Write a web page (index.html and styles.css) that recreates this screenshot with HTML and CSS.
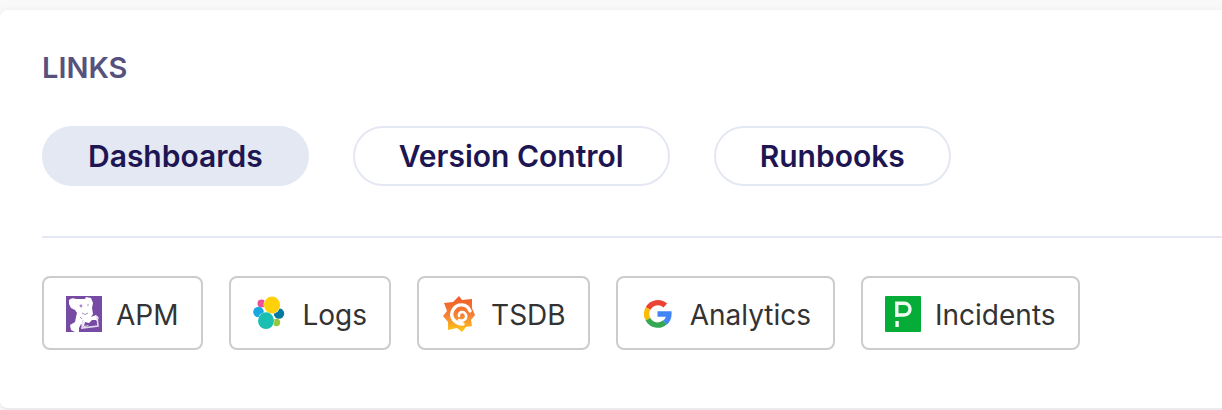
FILE: index.html
```html
<!DOCTYPE html>
<html lang="en">
<head>
<meta charset="utf-8">
<meta name="viewport" content="width=device-width, initial-scale=1">
<title>Links</title>
<link rel="stylesheet" href="styles.css">
</head>
<body>
<main class="card">
  <h2 class="title">LINKS</h2>
  <div class="tabs">
    <button class="tab tab-active" type="button">Dashboards</button>
    <button class="tab" type="button">Version Control</button>
    <button class="tab" type="button">Runbooks</button>
  </div>
  <nav class="links" aria-label="Dashboards">
    <a class="link" href="#apm">
      <svg class="icon" viewBox="0 0 36 36" aria-hidden="true">
        <path fill="#774aa4" d="M0 0h36v36H0z"/>
        <path fill="#fff" d="M3 4q3-3 7-1l9 0 1-2 5 1 2 5-1 5 1 6-2 3 5-2 3 3-3 3-5 1-3 4-4 1-3-3-2 4 0 4-4 0-4-2-1-5 5-3 1-5 1-4-2-3-4-2-2-4z"/>
        <path fill="none" stroke="#e4daee" stroke-width="1.6" d="M17 24l-1 8 16-2-1-10"/>
        <path fill="#774aa4" d="M18 30l1-4 4 1 3-3 4 0 0 4z"/>
        <circle cx="15" cy="10" r="1.4" fill="#a78ac4"/>
        <circle cx="22" cy="9" r="1" fill="#c9b7db"/>
        <path fill="none" stroke="#a78ac4" d="M16 17q3 3 6 0M14 21l2 2"/>
      </svg>
      <span>APM</span>
    </a>
    <a class="link" href="#logs">
      <svg class="icon" viewBox="0 0 36 36" aria-hidden="true">
        <circle cx="8.5" cy="7.5" r="4" fill="#ee5097"/>
        <circle cx="5.5" cy="16" r="5.3" fill="#17a8e0"/>
        <circle cx="26" cy="17.5" r="5.2" fill="#0779a1"/>
        <circle cx="23.5" cy="26.5" r="3.7" fill="#93c83e"/>
        <ellipse cx="19" cy="9" rx="8.4" ry="8.8" fill="#fff"/>
        <ellipse cx="13" cy="24.7" rx="8.4" ry="8.8" fill="#fff"/>
        <ellipse cx="19" cy="9" rx="8" ry="8.4" fill="#fed10a"/>
        <ellipse cx="13" cy="24.7" rx="8" ry="8.4" fill="#1bbfb1"/>
      </svg>
      <span>Logs</span>
    </a>
    <a class="link" href="#tsdb">
      <svg class="icon" viewBox="0 0 36 36" aria-hidden="true">
        <defs><linearGradient id="flame" x1="0" y1="0" x2="0" y2="1"><stop offset="0" stop-color="#f05a28"/><stop offset=".55" stop-color="#f68236"/><stop offset="1" stop-color="#fcca13"/></linearGradient></defs>
        <path fill="url(#flame)" d="M18 0l3 4 10-1 0 9 3 7-4 5 1 6-6 1-4 5-5-4-9 2 0-8-5-6 4-5-3-8 9-1z"/>
        <path fill="none" stroke="#fff" stroke-width="3.4" stroke-linecap="round" d="M29 15C26 7 16 7 12 14s2 14 10 14"/>
        <path fill="none" stroke="#fff" stroke-width="2.6" stroke-linecap="round" d="M18 20c-1-4 5-6 7-1 1 4-3 7-7 5"/>
      </svg>
      <span>TSDB</span>
    </a>
    <a class="link" href="#analytics">
      <svg class="icon" viewBox="0 0 36 36" aria-hidden="true">
        <g fill="none" stroke-width="5.4">
          <path stroke="#ea4335" d="M8.1 12.6A11 11 0 0 1 25.3 9.6"/>
          <path stroke="#fbbc05" d="M8.1 23.4a11 11 0 0 1 0-11"/>
          <path stroke="#34a853" d="M24.9 26.4A11 11 0 0 1 8 23.2"/>
          <path stroke="#4285f4" d="M17.5 18h11.4c0 3.5-1.5 6.7-4 8.6"/>
        </g>
      </svg>
      <span>Analytics</span>
    </a>
    <a class="link" href="#incidents">
      <svg class="icon" viewBox="0 0 36 36" aria-hidden="true">
        <rect width="36" height="36" rx="1" fill="#06ac38"/>
        <path fill="none" stroke="#effbf2" stroke-width="3.4" d="M11.8 21V7.2H19c8 0 8 11.8 0 11.8h-7.5"/>
        <path fill="#effbf2" d="M10.4 25h3.4v6h-3.4z"/>
      </svg>
      <span>Incidents</span>
    </a>
  </nav>
</main>
</body>
</html>
```
FILE: styles.css
```css
* { box-sizing: border-box; }
body {
  margin: 0;
  padding: 10px 0 0;
  background: #f9f9f9;
  color: #333;
  font-family: Inter, "Liberation Sans", sans-serif;
}
.card {
  padding: 40px 0 58px 42px;
  background: #fff;
  border-bottom: 2px solid #ebebed;
  border-radius: 8px 0 0 8px;
  box-shadow: 0 0 6px rgba(0, 0, 0, 0.06);
}
.title {
  margin: 0 0 40px;
  color: #57517e;
  font-size: 29px;
  font-weight: 600;
  line-height: 36px;
}
.tabs {
  display: flex;
  flex-wrap: wrap;
  gap: 44px;
  padding-bottom: 50px;
  border-bottom: 2px solid #e4e8f2;
}
.tab {
  padding: 10px 44px;
  border: 2px solid #e4e8f2;
  border-radius: 30px;
  background: #fff;
  color: #1e1652;
  font: inherit;
  font-size: 30px;
  font-weight: 600;
  line-height: 36px;
}
.tab-active { background: #e4e8f2; }
.links {
  display: flex;
  flex-wrap: wrap;
  gap: 26px;
  padding-top: 38px;
}
.link {
  display: flex;
  align-items: center;
  gap: 14px;
  padding: 18px 22px 16px;
  border: 2px solid #ccc;
  border-radius: 8px;
  color: #333;
  font-size: 28px;
  line-height: 34px;
  text-decoration: none;
}
.link span { padding-top: 2px; }
.icon { width: 36px; height: 36px; }
```
